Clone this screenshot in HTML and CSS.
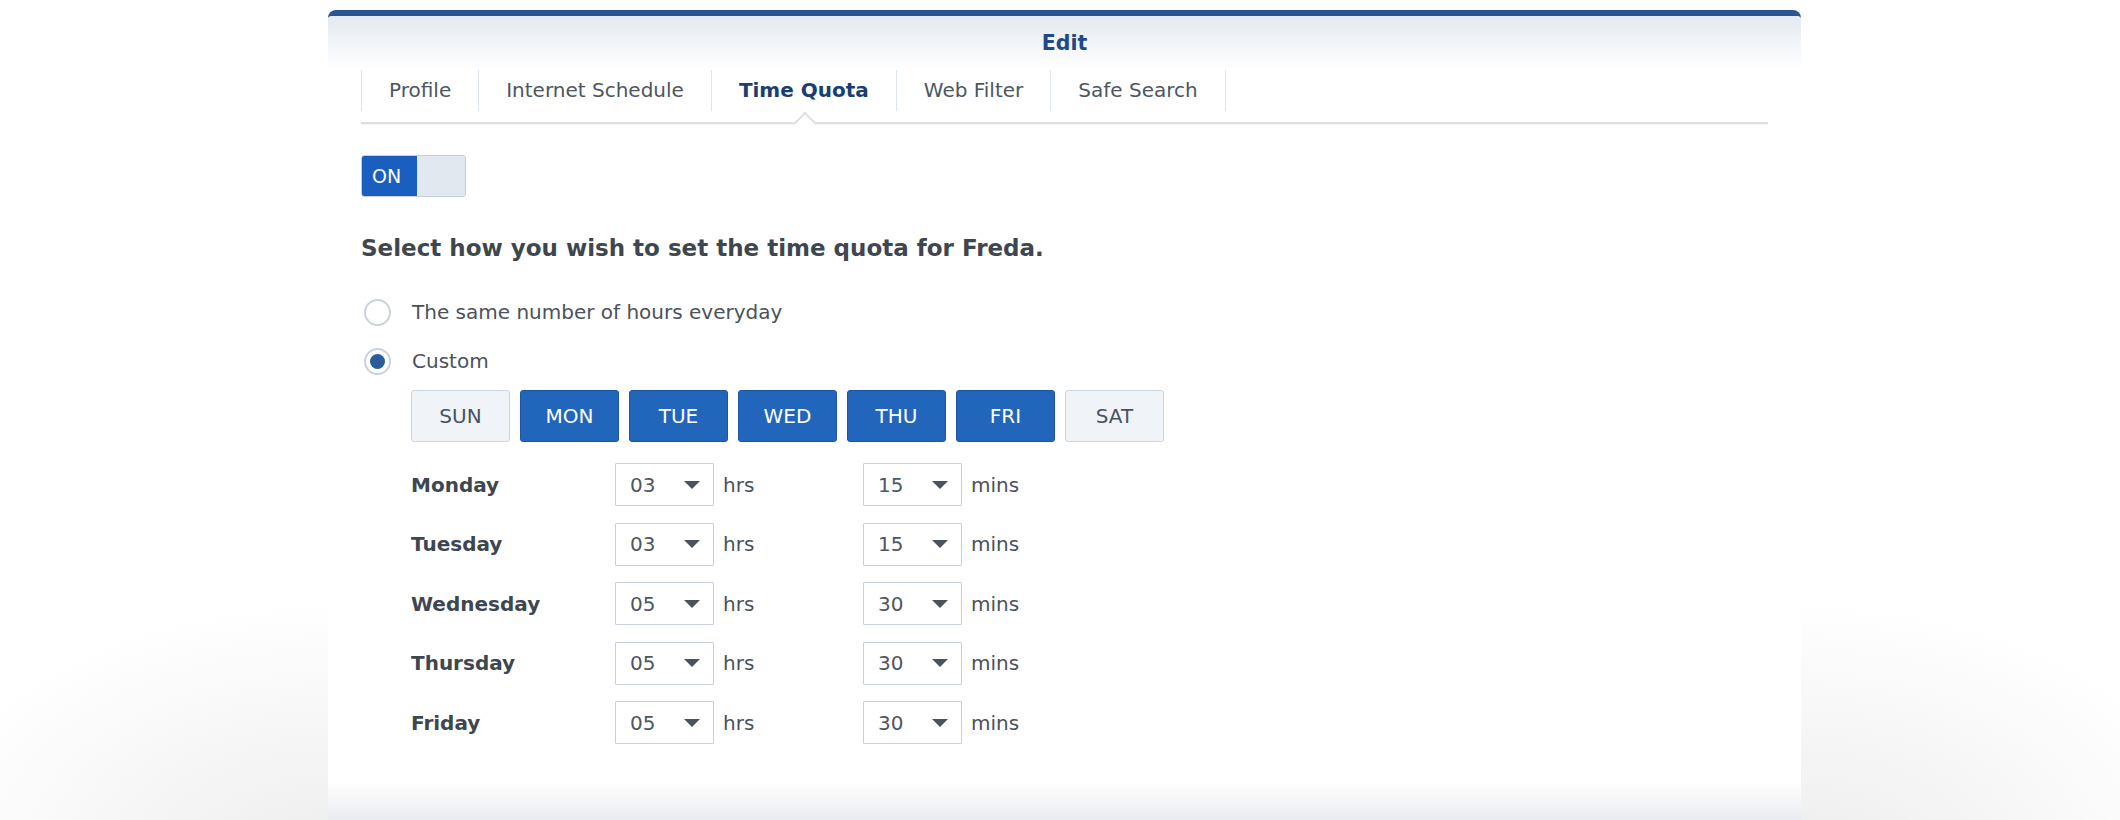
FILE: index.html
```html
<!DOCTYPE html>
<html>
<head>
<meta charset="utf-8">
<link rel="stylesheet" href="styles.css">
</head>
<body>
<div class="stage">
  <div class="panel">
    <div class="header">Edit</div>
    <div class="tabs">
      <div class="tab">Profile</div>
      <div class="tab">Internet Schedule</div>
      <div class="tab active">Time Quota</div>
      <div class="tab">Web Filter</div>
      <div class="tab">Safe Search</div>
    </div>
    <div class="content">
      <div class="toggle"><span class="toggle-on">ON</span><span class="toggle-off"></span></div>
      <h2 class="heading">Select how you wish to set the time quota for Freda.</h2>
      <div class="radio-row first"><span class="radio"></span><span>The same number of hours everyday</span></div>
      <div class="radio-row"><span class="radio checked"></span><span>Custom</span></div>
      <div class="custom">
        <div class="days">
          <div class="day">SUN</div>
          <div class="day on">MON</div>
          <div class="day on">TUE</div>
          <div class="day on">WED</div>
          <div class="day on">THU</div>
          <div class="day on">FRI</div>
          <div class="day">SAT</div>
        </div>
        <div class="quota">
          <div class="q-label">Monday</div>
          <div class="select"><span>03</span><i class="arrow"></i></div><div class="unit">hrs</div>
          <div class="select"><span>15</span><i class="arrow"></i></div><div class="unit">mins</div>

          <div class="q-label">Tuesday</div>
          <div class="select"><span>03</span><i class="arrow"></i></div><div class="unit">hrs</div>
          <div class="select"><span>15</span><i class="arrow"></i></div><div class="unit">mins</div>

          <div class="q-label">Wednesday</div>
          <div class="select"><span>05</span><i class="arrow"></i></div><div class="unit">hrs</div>
          <div class="select"><span>30</span><i class="arrow"></i></div><div class="unit">mins</div>

          <div class="q-label">Thursday</div>
          <div class="select"><span>05</span><i class="arrow"></i></div><div class="unit">hrs</div>
          <div class="select"><span>30</span><i class="arrow"></i></div><div class="unit">mins</div>

          <div class="q-label">Friday</div>
          <div class="select"><span>05</span><i class="arrow"></i></div><div class="unit">hrs</div>
          <div class="select"><span>30</span><i class="arrow"></i></div><div class="unit">mins</div>
        </div>
      </div>
    </div>
  </div>
</div>
</body>
</html>
```

FILE: styles.css
```css
* { box-sizing: border-box; }
html, body { margin: 0; padding: 0; background: #ffffff; }
body { font-family: "DejaVu Sans", "Noto Sans", sans-serif; color: #4a525c; }

.stage {
  width: 2120px;
  height: 820px;
  overflow: hidden;
  padding-top: 10px;
  background:
    radial-gradient(ellipse 420px 260px at 329px 860px, rgba(0,0,0,0.07), rgba(0,0,0,0) 100%),
    radial-gradient(ellipse 420px 260px at 1801px 860px, rgba(0,0,0,0.07), rgba(0,0,0,0) 100%),
    #ffffff;
}

.panel {
  margin-left: 328px;
  width: 1473px;
  height: 810px;
  border-top: 6px solid #2b5591;
  border-radius: 8px 8px 0 0;
  background: linear-gradient(to bottom, #ffffff 0, #ffffff 766px, #e9ebf0 804px);
}

.header {
  height: 54px;
  line-height: 54px;
  text-align: center;
  font-weight: 700;
  font-size: 20.5px;
  color: #1f4a86;
  background: linear-gradient(to bottom, #e4eaf1 0%, #ffffff 100%);
  border-radius: 4px 4px 0 0;
}

.tabs {
  display: flex;
  margin: 0 33px;
  padding-bottom: 11px;
  border-bottom: 2px solid #dcdfe4;
  box-shadow: 0 1px 1px rgba(0,0,0,0.04);
}
.tab {
  position: relative;
  height: 41px;
  line-height: 41px;
  padding: 0 27px;
  font-size: 20px;
  color: #4d5661;
  border-right: 1px solid #dde5ee;
}
.tab:first-child { border-left: 1px solid #dde5ee; }
.tab.active { font-weight: 700; color: #1b3e72; }
.tab.active::after {
  content: "";
  position: absolute;
  left: 50%;
  bottom: -20px;
  width: 14px;
  height: 14px;
  margin-left: -7px;
  background: #ffffff;
  border-top: 2px solid #dcdfe4;
  border-left: 2px solid #dcdfe4;
  transform: rotate(45deg);
}

.content { padding: 0 33px; }

.toggle {
  display: flex;
  width: 105px;
  height: 42px;
  margin-top: 31px;
  border: 1px solid #c4cdd8;
  border-radius: 3px;
  overflow: hidden;
}
.toggle-on {
  width: 55px;
  background: #1a5fbf;
  color: #ffffff;
  font-size: 19px;
  line-height: 40px;
  padding-left: 10px;
}
.toggle-off { flex: 1; background: #e1e8f0; }

.heading {
  margin: 36px 0 0;
  font-size: 23px;
  line-height: 30px;
  font-weight: 700;
  color: #3e4650;
}

.radio-row {
  display: flex;
  align-items: center;
  gap: 21px;
  height: 36px;
  margin-top: 13px;
  font-size: 20px;
  color: #4a525c;
  padding-left: 3px;
}
.radio-row.first { margin-top: 31px; }
.radio {
  width: 27px;
  height: 27px;
  border: 2px solid #c9d2dc;
  border-radius: 50%;
  background: #ffffff;
  position: relative;
  flex: none;
}
.radio.checked::after {
  content: "";
  position: absolute;
  left: 4px;
  top: 4px;
  width: 15px;
  height: 15px;
  border-radius: 50%;
  background: #2a5c9e;
}

.custom { padding-left: 50px; }

.days {
  display: flex;
  gap: 10px;
  margin-top: 11px;
}
.day {
  width: 99px;
  height: 52px;
  line-height: 50px;
  text-align: center;
  font-size: 20px;
  color: #4a525c;
  background: #f0f4f8;
  border: 1px solid #ccd6e0;
  border-radius: 3px;
}
.day.on {
  background: #2266bb;
  border-color: #1a56a5;
  color: #ffffff;
}

.quota {
  display: grid;
  grid-template-columns: 204px 99px 149px 99px auto;
  grid-auto-rows: 43px;
  row-gap: 16.5px;
  align-items: center;
  margin-top: 21px;
}
.q-label { font-weight: 700; font-size: 20px; color: #3e4650; }
.select {
  height: 43px;
  border: 1px solid #c7d1dc;
  border-radius: 1px;
  display: flex;
  align-items: center;
  justify-content: space-between;
  padding: 0 13px 0 14px;
  font-size: 20px;
  color: #4e5660;
  background: #ffffff;
}
.arrow {
  width: 0;
  height: 0;
  border-left: 8px solid transparent;
  border-right: 8px solid transparent;
  border-top: 8px solid #4a525c;
}
.unit { padding-left: 9px; font-size: 20px; color: #4a525c; }
```
